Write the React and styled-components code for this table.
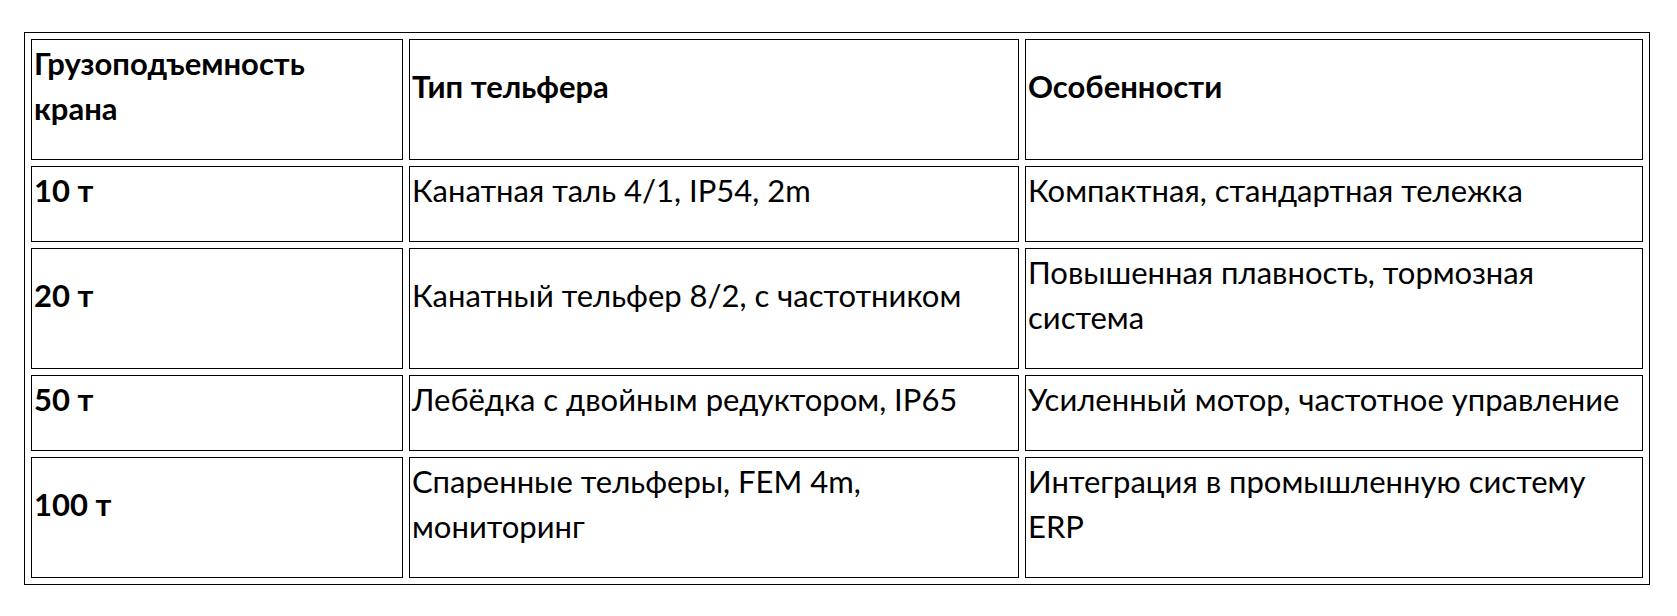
import styled, { createGlobalStyle } from 'styled-components';

const GlobalStyle = createGlobalStyle`
    html, body {
        margin: 0;
        padding: 0;
        background: #FFFFFF;
    }
`;

const Pagina = styled.div`
    padding: 32px 0 0 24px;
    font-family: Lato, "Liberation Sans", sans-serif;
    color: #000000;
`;

const Tabela = styled.table`
    border: 1px solid #000000;
    border-collapse: separate;
    border-spacing: 6px;
    table-layout: fixed;
    width: 1626px;
`;

const Celula = styled.td`
    border: 1px solid #000000;
    padding: 1px 4px 28px 2px;
    vertical-align: middle;
    font-size: 31px;
    line-height: 45px;
    font-weight: ${(props) => (props.$negrito ? 700 : 400)};
    box-sizing: border-box;
`;

const linhas = [
    ['10 т', 'Канатная таль 4/1, IP54, 2m', 'Компактная, стандартная тележка'],
    ['20 т', 'Канатный тельфер 8/2, с частотником', ['Повышенная плавность, тормозная', 'система']],
    ['50 т', 'Лебёдка с двойным редуктором, IP65', 'Усиленный мотор, частотное управление'],
    ['100 т', ['Спаренные тельферы, FEM 4m,', 'мониторинг'], ['Интеграция в промышленную систему', 'ERP']],
];

function Texto({ valor }) {
    if (!Array.isArray(valor)) return valor;
    return valor.map((parte, i) => (
        <span key={i}>
            {i > 0 && <br />}
            {parte}
        </span>
    ));
}

export default function App() {
    return (
        <Pagina>
            <GlobalStyle />
            <Tabela>
                <colgroup>
                    <col style={{ width: '372px' }} />
                    <col style={{ width: '610px' }} />
                    <col style={{ width: '618px' }} />
                </colgroup>
                <tbody>
                    <tr>
                        <Celula $negrito>Грузоподъемность<br />крана</Celula>
                        <Celula $negrito>Тип тельфера</Celula>
                        <Celula $negrito>Особенности</Celula>
                    </tr>
                    {linhas.map((linha) => (
                        <tr key={linha[0]}>
                            <Celula $negrito>{linha[0]}</Celula>
                            <Celula><Texto valor={linha[1]} /></Celula>
                            <Celula><Texto valor={linha[2]} /></Celula>
                        </tr>
                    ))}
                </tbody>
            </Tabela>
        </Pagina>
    );
}
